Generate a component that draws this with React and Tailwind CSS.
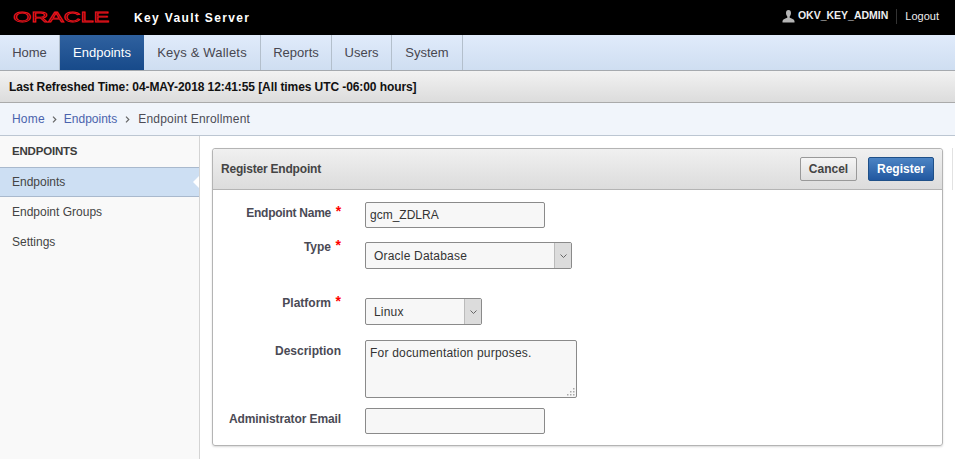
import React from "react";

const tabs = [
  { name: "Home", width: "w-[60px]" },
  { name: "Endpoints", width: "w-[84px]" },
  { name: "Keys & Wallets", width: "w-[117px] tracking-[0.2px]" },
  { name: "Reports", width: "w-[71px]" },
  { name: "Users", width: "w-[60px]" },
  { name: "System", width: "w-[71px]" },
];

function Label({ children, required, className = "" }) {
  return (
    <div className={"w-[128px] shrink-0 mr-[24px] flex justify-end font-bold text-[12px] text-[#4a4a55] " + className}>
      <span>{children}</span>
      {required && <span className="w-[10px] text-right text-[14px] leading-[14px] text-[#ff0000]">*</span>}
    </div>
  );
}

function Select({ value, className }) {
  return (
    <div className={"flex h-[27px] border border-[#8a8a8a] rounded-[2px] bg-[#f7f7f7] text-[12px] tracking-[0.2px] text-[#333] " + className}>
      <span className="flex-1 pl-[8px] leading-[26px]">{value}</span>
      <span className="w-[17px] flex items-center justify-center bg-[#dcdcdc] border-l border-[#bbb]">
        <svg width="9" height="6" viewBox="0 0 9 6" fill="none" stroke="#666" strokeWidth="1"><path d="M1.500 1.500l3 3 3-3" /></svg>
      </span>
    </div>
  );
}

export default function App() {
  return (
    <div className="w-[955px] h-[459px] overflow-hidden bg-white font-['Liberation_Sans',Arial,sans-serif] flex flex-col">
      <div className="h-[35px] shrink-0 bg-black flex items-center text-white">
        <svg width="98" height="14" viewBox="0 0 98 14" className="ml-[12px] mb-[1px]">
          <text x="1" y="12" textLength="96" lengthAdjust="spacingAndGlyphs" fontSize="14" fontFamily="Liberation Sans" fill="#000" stroke="#f0141e" strokeWidth="0.8">ORACLE</text>
        </svg>
        <span className="ml-[24px] font-bold text-[12px] tracking-[1.35px] mt-[1px]">Key Vault Server</span>
        <div className="ml-auto flex items-center mb-[3px] pr-[16px]">
          <svg width="13" height="13" viewBox="0 0 13 13" fill="#b4b4b4" className="mr-[3px]">
            <path d="M6.500 0C4.800 0 4 1.300 4 3c0 1.500.6 2.800 1.300 3.500v1.300C3.600 8.600.8 9.300.5 11v1.500h12V11c-.3-1.700-3.100-2.400-4.800-3.200V6.500C8.400 5.800 9 4.500 9 3c0-1.700-.8-3-2.500-3z" />
          </svg>
          <span className="font-bold text-[10.5px] text-[#eee]">OKV_KEY_ADMIN</span>
          <span className="w-px h-[15px] bg-[#333] ml-[8px] mr-[8px]" />
          <span className="text-[11px] text-[#eee]">Logout</span>
        </div>
      </div>

      <div className="h-[36px] shrink-0 flex bg-gradient-to-b from-[#e0ebfb] to-[#cfdef1] border-b border-[#a5a9ae] text-[13px]">
        {tabs.map((t) =>
          t.name === "Endpoints" ? (
            <div key={t.name} className={t.width + " text-center leading-[35px] text-white bg-gradient-to-b from-[#2f619f] to-[#174a8a]"}>{t.name}</div>
          ) : (
            <div key={t.name} className={t.width + " text-center leading-[35px] text-[#474750] border-r border-[#b3bfcc]"}>{t.name}</div>
          )
        )}
      </div>

      <div className="h-[32px] shrink-0 flex items-center pl-[9px] bg-gradient-to-b from-[#f2f2f2] to-[#dcdcdc] border-b border-[#aaa] font-bold text-[12px] tracking-[-0.086px] text-[#111]">
        Last Refreshed Time: 04-MAY-2018 12:41:55 [All times UTC -06:00 hours]
      </div>

      <div className="h-[33px] shrink-0 flex items-center pl-[12px] bg-[#f1f5fb] border-b border-[#bcc6d2] text-[12px] tracking-[0.2px] text-[#4c4c56]">
        <span className="text-[#4a63ad]">Home</span>
        <svg width="5" height="7" viewBox="0 0 5 7" fill="none" stroke="#666" strokeWidth="1.2" className="mx-[7px]"><path d="M1 .7l2.800 2.800L1 6.300" /></svg>
        <span className="text-[#4a63ad] tracking-normal">Endpoints</span>
        <svg width="5" height="7" viewBox="0 0 5 7" fill="none" stroke="#666" strokeWidth="1.2" className="mx-[8px]"><path d="M1 .7l2.800 2.800L1 6.300" /></svg>
        <span>Endpoint Enrollment</span>
      </div>

      <div className="flex-1 flex min-h-0">
        <div className="w-[200px] shrink-0 bg-[#f9f9f9] border-r border-[#d4d4d4] text-[12px] text-[#444]">
          <div className="h-[31px] pl-[12px] pt-[7px] font-bold text-[11.5px] tracking-[-0.2px] text-[#3c3c3c]">ENDPOINTS</div>
          <div className="relative h-[30px] pl-[12px] leading-[28px] bg-[#cddff3] border-y border-[#a9b9cd]">
            Endpoints
            <span className="absolute right-0 top-[8px] w-0 h-0 border-y-[6px] border-y-transparent border-r-[6px] border-r-white" />
          </div>
          <div className="h-[30px] pl-[12px] leading-[30px]">Endpoint Groups</div>
          <div className="h-[30px] pl-[12px] leading-[30px]">Settings</div>
        </div>

        <div className="flex-1 flex pt-[12px] pl-[12px]">
          <div className="w-[731px] h-[298px] border border-[#b4b4b4] rounded-[3px] shadow-[0_1px_2px_rgba(0,0,0,0.15)]">
            <div className="h-[41px] flex items-center pl-[8px] pr-[8px] bg-gradient-to-b from-[#f0f0f0] to-[#dcdcdc] border-b border-[#b4b4b4] rounded-t-[3px]">
              <span className="font-bold text-[12px] tracking-[-0.2px] text-[#444]">Register Endpoint</span>
              <button className="ml-auto w-[57px] h-[24px] border border-[#999] rounded-[2px] bg-gradient-to-b from-[#f5f5f5] to-[#dedede] font-bold text-[12px] text-[#444]">Cancel</button>
              <button className="ml-[11px] w-[66px] h-[24px] border border-[#1f5088] rounded-[2px] bg-gradient-to-b from-[#4c84c4] to-[#2258a0] font-bold text-[12px] text-white">Register</button>
            </div>

            <div className="flex pt-[12px]">
              <Label required className="pt-[2px] tracking-[-0.25px]">Endpoint Name</Label>
              <input readOnly value="gcm_ZDLRA" className="w-[180px] h-[26px] px-[4px] border border-[#8a8a8a] rounded-[2px] bg-[#f7f7f7] text-[12px] text-[#333] outline-none" />
            </div>
            <div className="flex mt-[14px]">
              <Label required className="-mt-[4px]">Type</Label>
              <Select value="Oracle Database" className="w-[207px]" />
            </div>
            <div className="flex mt-[29px]">
              <Label required className="-mt-[4px]">Platform</Label>
              <Select value="Linux" className="w-[117px]" />
            </div>
            <div className="flex mt-[15px]">
              <Label className="pt-[2px]">Description</Label>
              <div className="relative w-[212px] h-[58px] border border-[#8a8a8a] rounded-[2px] bg-[#f7f7f7] pl-[4px] pt-[3px] text-[12px] tracking-[0.2px] text-[#333]">
                For documentation purposes.
                <svg width="9" height="9" viewBox="0 0 9 9" fill="#aaa" className="absolute right-[1px] bottom-[1px]">
                  <rect x="7" y="1" width="1.500" height="1.500" /><rect x="4" y="4" width="1.500" height="1.500" /><rect x="7" y="4" width="1.500" height="1.500" /><rect x="1" y="7" width="1.500" height="1.500" /><rect x="4" y="7" width="1.500" height="1.500" /><rect x="7" y="7" width="1.500" height="1.500" />
                </svg>
              </div>
            </div>
            <div className="flex mt-[10px]">
              <Label className="pt-[2px] tracking-[-0.1px]">Administrator Email</Label>
              <input readOnly className="w-[180px] h-[26px] border border-[#8a8a8a] rounded-[2px] bg-[#f7f7f7] outline-none" />
            </div>
          </div>
          <div className="w-[2px] h-[42px] ml-[9px] border-l border-[#e2e2e2]" />
        </div>
      </div>
    </div>
  );
}
